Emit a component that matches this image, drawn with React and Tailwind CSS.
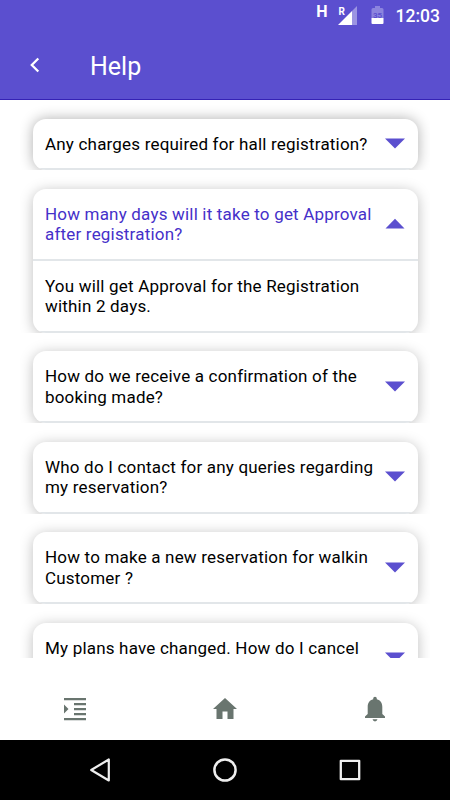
import { useState } from 'react';
import { clsx } from 'clsx';

const FAQS = [
  { id: 1, question: 'Any charges required for hall registration?' },
  {
    id: 2,
    question: 'How many days will it take to get Approval after registration?',
    answer: 'You will get Approval for the Registration within 2 days.',
  },
  { id: 3, question: 'How do we receive a confirmation of the booking made?' },
  { id: 4, question: 'Who do I contact for any queries regarding my reservation?' },
  { id: 5, question: 'How to make a new reservation for walkin Customer ?' },
  { id: 6, question: 'My plans have changed. How do I cancel', tall: true },
];

function StatusBar() {
  return (
    <div className="flex h-8 shrink-0 items-start pr-[10px] text-white">
      <span className="ml-auto mt-[1px] text-[16px] leading-[21px] font-bold">H</span>
      <svg className="ml-[10px] mt-[5px]" width="21" height="20" viewBox="0 0 21 20">
        <path d="M19 1V20H14V6Z" fill="#9b94e2" />
        <path d="M14 6V20H0Z" fill="#fff" />
        <text x="0.5" y="9.500" fontSize="10" fontWeight="700" fill="#fff">R</text>
      </svg>
      <svg className="ml-[12px] mt-[5px]" width="13" height="20" viewBox="0 0 13 20">
        <path d="M4 1H9V3H11Q12.500 3 12.500 4.500V13H0.500V4.500Q0.500 3 2 3H4Z" fill="#8c84de" />
        <path d="M0.500 13H12.500V18Q12.500 19 11.500 19H1.500Q0.500 19 0.500 18Z" fill="#fff" />
        <text x="6.500" y="12.500" fontSize="8" fontWeight="700" textAnchor="middle" fill="#5b4fcf">35</text>
      </svg>
      <span className="ml-[12px] mt-[5px] text-[17.5px] leading-[22px] font-medium">12:03</span>
    </div>
  );
}

function Header() {
  return (
    <header className="flex h-[68px] shrink-0 items-center border-b border-[#3522b5]">
      <button type="button" aria-label="Back" className="-mt-[2px] ml-[29px]">
        <svg width="12" height="16" viewBox="0 0 12 16" fill="none" stroke="#fff" strokeWidth="2.3">
          <path d="M9.300 1.500L2.800 8L9.300 14.500" />
        </svg>
      </button>
      <h1 className="mt-[2px] ml-[49px] text-[25px] leading-[30px] text-white">Help</h1>
    </header>
  );
}

function FaqCard({ faq, open, first, onToggle }) {
  return (
    <section className={clsx('overflow-hidden px-[12.5px]', first ? 'pt-[18.8px]' : 'pt-[18.5px]')}>
      <div
        className={clsx(
          'overflow-hidden rounded-[13px] bg-white',
          first ? 'shadow-[0_0_14px_0_rgba(0,0,0,0.32)]' : 'shadow-[0_2px_14px_0_rgba(0,0,0,0.26)]'
        )}
      >
        <button
          type="button"
          onClick={onToggle}
          className={clsx(
            'flex w-full items-center border-b-[2px] border-[#e2e6e9] px-[12.5px] pt-[15.2px] pb-[13.6px] text-left',
            open ? 'text-[#4530c9]' : 'text-black'
          )}
        >
          <span className={clsx('w-[336px]', faq.tall && 'min-h-[41.2px]')}>{faq.question}</span>
          <svg className="-mt-[1px] ml-auto shrink-0" width="20" height="11" viewBox="0 0 20 11" fill="#5b4fcf">
            {open ? <path d="M0.500 10.500L10 0.800L19.500 10.500Z" /> : <path d="M0 0.500H20L10 10.500Z" />}
          </svg>
        </button>
        {open && (
          <div className="border-b-[2px] border-[#e2e6e9] px-[12.5px] pt-[15.2px] pb-[13.6px]">{faq.answer}</div>
        )}
      </div>
    </section>
  );
}

function BottomTabs() {
  return (
    <nav className="grid h-[82px] shrink-0 grid-cols-3 items-center justify-items-center pt-5 text-[#69756f]">
      <svg width="24" height="24" viewBox="0 0 24 24" fill="currentColor">
        <path d="M1 1H23V3.200H1ZM11 6H23V8.200H11ZM11 11H23V13.200H11ZM11 16H23V18.200H11ZM1 21H23V23.200H1ZM1 7.500L5.500 12L1 16.500Z" />
      </svg>
      <svg width="26" height="24" viewBox="0 0 26 24" fill="currentColor">
        <path d="M13 1L25 12H21.500V22H15.500V14.500H10.500V22H4.500V12H1Z" />
      </svg>
      <svg width="22" height="26" viewBox="0 0 22 26" fill="currentColor">
        <path d="M9.200 2.500a1.800 1.800 0 0 1 3.600 0v0.800C16.500 4.200 18.300 7.200 18.300 11V18L21 20.500V22H1V20.500L3.700 18V11C3.700 7.200 5.500 4.200 9.200 3.300ZM8.500 23.300H13.500Q13 25.400 11 25.400Q9 25.400 8.500 23.300Z" />
      </svg>
    </nav>
  );
}

function SystemNav() {
  return (
    <div className="grid h-[60px] shrink-0 grid-cols-[200px_50px_200px] items-center justify-items-center bg-black">
      <svg width="24" height="26" viewBox="0 0 24 26" fill="none" stroke="#eee" strokeWidth="2.200" strokeLinejoin="round">
        <path d="M20.800 2.500V23.500L3.200 13Z" />
      </svg>
      <svg width="26" height="26" viewBox="0 0 26 26" fill="none" stroke="#eee" strokeWidth="2.500">
        <circle cx="13" cy="13" r="10.600" />
      </svg>
      <svg width="24" height="24" viewBox="0 0 24 24" fill="none" stroke="#eee" strokeWidth="2.300" strokeLinejoin="round">
        <rect x="2.800" y="2.800" width="18.400" height="18.400" />
      </svg>
    </div>
  );
}

export default function App() {
  const [openId, setOpenId] = useState(2);

  return (
    <div className="flex h-[800px] w-[450px] flex-col overflow-hidden bg-white font-['Roboto',sans-serif]">
      <div className="shrink-0 bg-[#5b4fcf]">
        <StatusBar />
        <Header />
      </div>
      <main className="h-[557.5px] shrink-0 overflow-hidden px-5 text-[17px] leading-[20.6px] tracking-[0.19px]">
        {FAQS.map((faq, i) => (
          <FaqCard
            key={faq.id}
            faq={faq}
            first={i === 0}
            open={openId === faq.id}
            onToggle={() => setOpenId(openId === faq.id ? null : faq.id)}
          />
        ))}
      </main>
      <BottomTabs />
      <SystemNav />
    </div>
  );
}
